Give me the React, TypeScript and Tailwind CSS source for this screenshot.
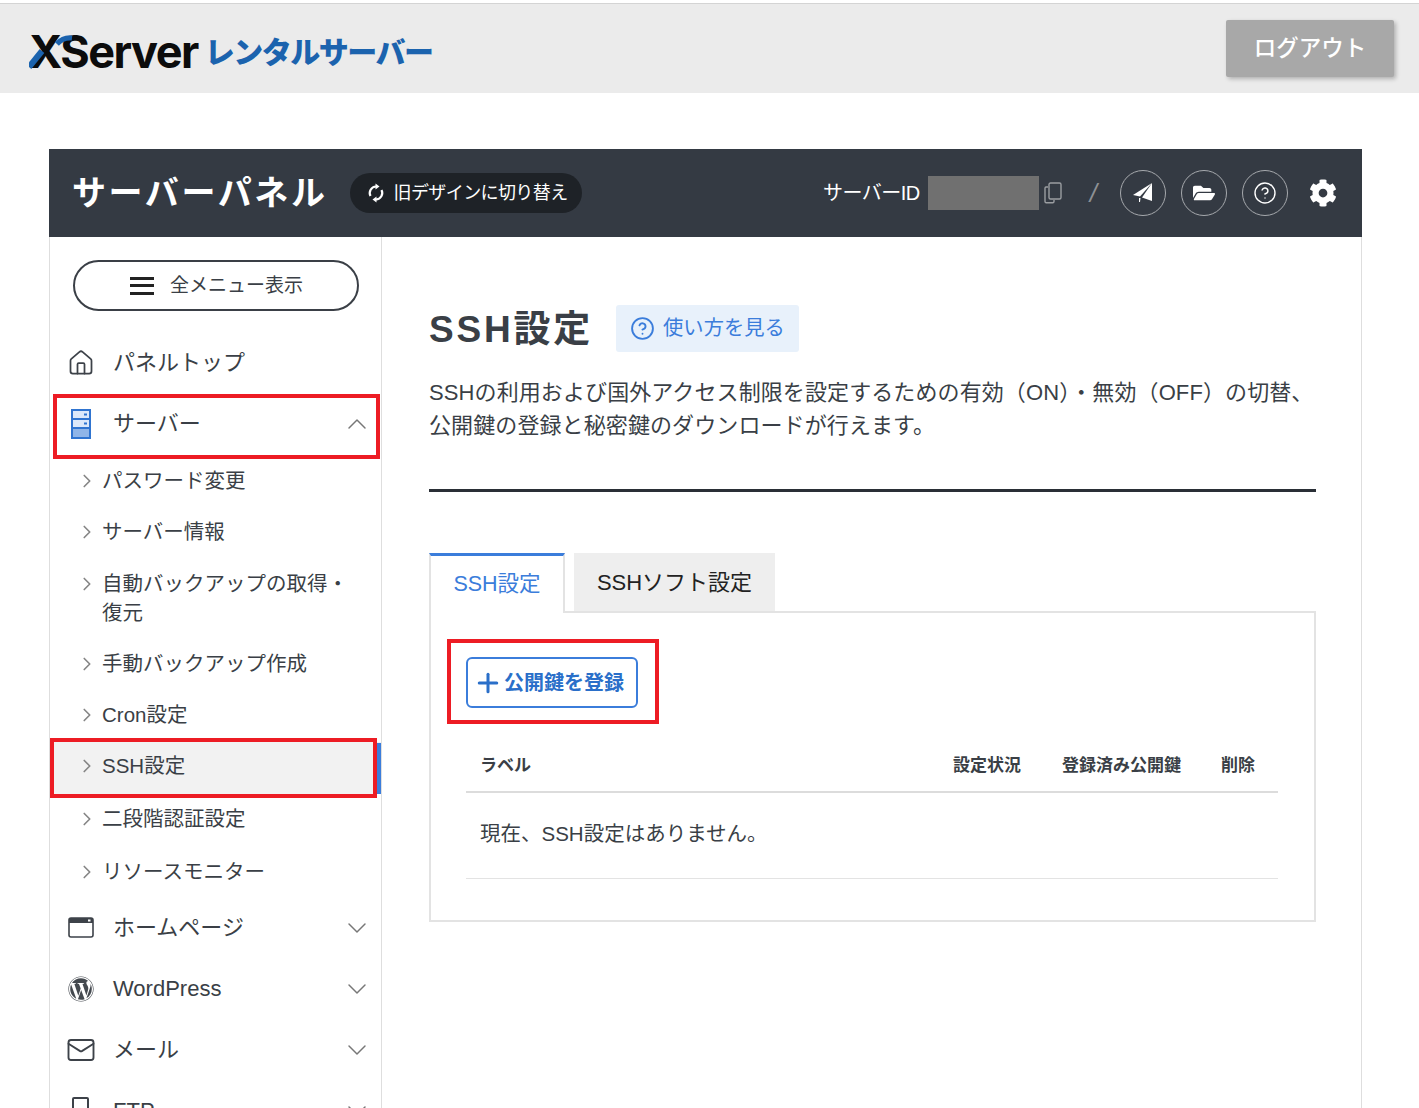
import { ChevronDown, ChevronRight, ChevronUp, CircleHelp, House, Mail, Plus } from "lucide-react";
import { FaCog, FaFolderOpen, FaWordpress } from "react-icons/fa";

const font = "font-['Liberation_Sans','Noto_Sans_CJK_JP',sans-serif]";

const ServerIcon = () => (
  <svg width="20" height="30" viewBox="0 0 20 30" className="block">
    <rect x="1" y="1" width="18" height="28" fill="#dbe8fa" stroke="#2f74d0" strokeWidth="2" />
    <line x1="1" y1="10" x2="19" y2="10" stroke="#2f74d0" strokeWidth="2" />
    <line x1="1" y1="19" x2="19" y2="19" stroke="#2f74d0" strokeWidth="2" />
    <rect x="2" y="20" width="16" height="8" fill="#8fb5e8" />
    <rect x="13" y="4.5" width="3" height="2" fill="#2f74d0" />
    <rect x="13" y="13.5" width="3" height="2" fill="#2f74d0" />
  </svg>
);

const BrowserIcon = () => (
  <svg width="26" height="21" viewBox="0 0 26 21" className="ml-[1px] block">
    <rect x="1" y="1" width="24" height="19" rx="2" fill="none" stroke="#3d4249" strokeWidth="1.6" />
    <rect x="1" y="1" width="24" height="5" fill="#3d4249" />
    <rect x="20" y="2.5" width="2.5" height="2" fill="#fff" />
  </svg>
);

const PlaneIcon = () => (
  <svg width="24" height="24" viewBox="0 0 24 24" className="block" fill="#fff">
    <polygon points="21,2 2,14 9,15.5" />
    <polygon points="21,2 11,16.5 21,20" />
    <polygon points="8,17 9.5,17 9,21 8,21" />
  </svg>
);

const SwitchIcon = () => (
  <svg width="18" height="20" viewBox="0 0 18 20" className="block" fill="none" stroke="#fff" strokeWidth="2.2">
    <path d="M3.5 13 A6.5 6.5 0 0 1 9 3.5" />
    <path d="M14.5 7 A6.5 6.5 0 0 1 9 16.5" />
    <polygon points="8.5,0.5 12.5,3.5 8.5,6.5" fill="#fff" stroke="none" />
    <polygon points="9.5,13.5 5.5,16.5 9.5,19.5" fill="#fff" stroke="none" />
  </svg>
);

const CopyIcon = () => (
  <svg width="18" height="22" viewBox="0 0 18 22" className="block" fill="none" stroke="#9a9da1" strokeWidth="1.4">
    <path d="M4 5 H2 A1.2 1.2 0 0 0 1 6 V19.5 A1.2 1.2 0 0 0 2 20.7 H9 A1.2 1.2 0 0 0 10 19.5 V18" />
    <rect x="5" y="1" width="12" height="16" rx="1.5" />
  </svg>
);

const MainRow = ({ icon, label, open }: { icon: React.ReactNode; label: string; open?: boolean }) => (
  <div className="flex h-[61px] items-center pl-[17px] pr-[12px]">
    <div className="flex w-[46px] shrink-0 items-center justify-start">{icon}</div>
    <span className="flex-1 text-[22px] text-[#3a3f46]">{label}</span>
    {open === undefined ? null : open ? (
      <ChevronUp className="-m-[4px] h-[32px] w-[32px] text-[#777]" strokeWidth={1.1} />
    ) : (
      <ChevronDown className="-m-[4px] h-[32px] w-[32px] text-[#777]" strokeWidth={1.1} />
    )}
  </div>
);

const SubRow = ({ lines, h = "h-[52px]", pt = "pt-[11px]", bg = "" }: { lines: string[]; h?: string; pt?: string; bg?: string }) => (
  <div className={`flex items-start ${h} ${pt} ${bg} pl-[26px]`}>
    <ChevronRight className="mt-[4px] mr-[4px] h-[22px] w-[22px] shrink-0 text-[#858585]" strokeWidth={1.8} />
    <div className="text-[20.5px] leading-[29px] text-[#3a3f46]">
      {lines.map((l) => (
        <div key={l}>{l}</div>
      ))}
    </div>
  </div>
);

const HeadCircle = ({ children }: { children: React.ReactNode }) => (
  <div className="flex h-[46px] w-[46px] items-center justify-center rounded-full border border-[#a6a9ad] text-white">
    {children}
  </div>
);

export default function App() {
  return (
    <div className={`relative h-[1108px] overflow-hidden bg-white ${font}`}>
      {/* top bar */}
      <div className="mt-[3px] flex h-[90px] items-center justify-between border-t border-[#d4d4d4] bg-[#ebebeb] pl-[29px] pr-[25px]">
        <div className="mt-[6px] flex items-center">
          <div className="relative font-['Inter',sans-serif] text-[45px] font-bold leading-none tracking-[-1.5px] text-[#0c0c0c]">
            XServer
            <svg width="48" height="45" viewBox="0 0 48 45" className="absolute left-0 top-0">
              <path d="M0 38 L13 22" stroke="#1b63ae" strokeWidth="6" fill="none" />
              <path d="M28 15 Q34 8 43 9" stroke="#1b63ae" strokeWidth="5" fill="none" />
            </svg>
          </div>
          <span className="ml-[7px] mt-[3px] text-[30px] font-black leading-none tracking-[-1.5px] text-[#1b63ae]">
            レンタルサーバー
          </span>
        </div>
        <button className="mb-[1px] h-[57px] w-[168px] rounded-[2px] bg-[#a8a8a8] pt-[1px] text-[22.5px] font-medium text-white shadow-[2px_2px_4px_rgba(0,0,0,0.25)]">
          ログアウト
        </button>
      </div>

      {/* panel */}
      <div className="ml-[49px] mt-[56px] w-[1313px]">
        <div className="flex h-[88px] items-center bg-[#343a43] pl-[23px] pr-[25px]">
          <span className="text-[34px] font-bold tracking-[2.6px] text-white">サーバーパネル</span>
          <div className="ml-[22px] flex h-[40px] w-[232px] items-center rounded-full bg-[#1e2227] pl-[17px] text-[18px] text-white">
            <SwitchIcon />
            <span className="ml-[9px] tracking-[-0.6px]">旧デザインに切り替え</span>
          </div>
          <div className="ml-auto flex items-center">
            <span className="text-[20px] tracking-[-0.5px] text-white">サーバーID</span>
            <div className="ml-[8px] h-[34px] w-[111px] bg-[#707070]" />
            <div className="ml-[5px]"><CopyIcon /></div>
            <span className="ml-[28px] mr-[23px] text-[26px] font-light italic text-[#8d9094]">/</span>
            <div className="flex items-center gap-[15px]">
              <HeadCircle><PlaneIcon /></HeadCircle>
              <HeadCircle><FaFolderOpen className="h-[22px] w-[22px]" /></HeadCircle>
              <HeadCircle><CircleHelp className="h-[24px] w-[24px]" strokeWidth={1.4} /></HeadCircle>
              <FaCog className="ml-[6px] h-[28px] w-[28px] text-white" />
            </div>
          </div>
        </div>

        <div className="flex h-[900px] border-x border-[#dedede]">
          {/* sidebar */}
          <aside className="w-[332px] shrink-0 border-r border-[#dedede]">
            <div className="flex justify-center pt-[23px] pb-[21px]">
              <div className="flex h-[51px] w-[286px] items-center justify-center rounded-full border-2 border-[#3a3f46] pl-[2px] text-[19px] text-[#3a3f46]">
                <span className="mr-[16px] flex h-[18px] w-[24px] flex-col justify-between">
                  <span className="h-[3px] bg-[#222]" />
                  <span className="h-[3px] bg-[#222]" />
                  <span className="h-[3px] bg-[#222]" />
                </span>
                <span className="pt-[2px]">全メニュー表示</span>
              </div>
            </div>
            <MainRow icon={<House className="h-[28px] w-[28px] text-[#3d4249]" strokeWidth={1.5} />} label="パネルトップ" />
            <div className="relative">
              <MainRow icon={<span className="ml-[4px]"><ServerIcon /></span>} label="サーバー" open />
              <div className="absolute left-[3px] top-[1px] h-[65px] w-[327px] border-4 border-[#ed1c24]" />
            </div>
            <SubRow lines={["パスワード変更"]} pt="pt-[12px]" />
            <SubRow lines={["サーバー情報"]} pt="pt-[11px]" />
            <SubRow lines={["自動バックアップの取得・", "復元"]} h="h-[80px]" pt="pt-[11px]" />
            <SubRow lines={["手動バックアップ作成"]} pt="pt-[11px]" />
            <SubRow lines={["Cron設定"]} pt="pt-[10px]" />
            <div className="relative">
              <SubRow lines={["SSH設定"]} pt="pt-[9px]" bg="bg-[#f2f2f2]" />
              <div className="absolute left-0 top-[-4px] h-[60px] w-[327px] border-4 border-[#ed1c24]" />
              <div className="absolute right-0 top-[1px] h-[51px] w-[4px] bg-[#3b7ddb]" />
            </div>
            <SubRow lines={["二段階認証設定"]} pt="pt-[10px]" />
            <SubRow lines={["リソースモニター"]} h="h-[51px]" pt="pt-[11px]" />
            <MainRow icon={<BrowserIcon />} label="ホームページ" open={false} />
            <MainRow icon={<FaWordpress className="ml-[1px] h-[26px] w-[26px] text-[#44494f]" />} label="WordPress" open={false} />
            <MainRow icon={<Mail className="-my-[1px] -ml-[1px] h-[30px] w-[30px] text-[#3d4249]" strokeWidth={1.5} />} label="メール" open={false} />
            <MainRow icon={<div className="ml-[5px] h-[28px] w-[17px] rounded-[2px] border-2 border-[#3d4249]" />} label="FTP" open={false} />
          </aside>

          {/* main */}
          <main className="flex-1 pl-[47px] pr-[45px] pt-[67px]">
            <div className="flex items-center">
              <h1 className="mt-[2px] text-[37px] font-bold leading-[47px] tracking-[2.8px] text-[#3a3f46]">SSH設定</h1>
              <div className="ml-[23px] flex h-[47px] w-[183px] items-center rounded-[3px] bg-[#e8f1fb] pl-[14px] text-[20.3px] text-[#3b7ddb]">
                <CircleHelp className="mr-[8px] h-[25px] w-[25px]" strokeWidth={1.8} />
                使い方を見る
              </div>
            </div>
            <p className="mt-[23px] whitespace-nowrap text-[22px] leading-[33px] tracking-[0.1px] text-[#3a3f46]">
              SSHの利用および国外アクセス制限を設定するための有効（ON）・無効（OFF）の切替、
              <br />
              公開鍵の登録と秘密鍵のダウンロードが行えます。
            </p>
            <div className="mt-[47px] h-[3px] bg-[#2a2f36]" />

            <div className="mt-[61px] flex h-[60px] items-end">
              <div className="flex h-[60px] w-[136px] items-center justify-center border-x-2 border-t-[3px] border-x-[#e3e3e3] border-t-[#3b7ddb] bg-white text-[21.5px] text-[#3b7ddb]">
                SSH設定
              </div>
              <div className="h-[60px] w-[9px] border-b-2 border-[#e3e3e3]" />
              <div className="flex h-[60px] w-[201px] items-center justify-center border-b-2 border-[#e3e3e3] bg-[#eeeeee] text-[22px] text-[#222]">
                SSHソフト設定
              </div>
              <div className="h-[60px] flex-1 border-b-2 border-[#e3e3e3]" />
            </div>
            <div className="h-[309px] border-2 border-t-0 border-[#e3e3e3] pl-[35px] pr-[36px] pt-[44px]">
              <div className="relative">
                <button className="flex h-[51px] w-[172px] items-center justify-center rounded-[6px] border-2 border-[#3b7ddb] pr-[2px] text-[20px] font-bold text-[#2a6fc9]">
                  <Plus className="-ml-[5px] mr-[1px] h-[30px] w-[30px]" strokeWidth={2.4} />
                  公開鍵を登録
                </button>
                <div className="absolute left-[-19px] top-[-18px] h-[85px] w-[212px] border-4 border-[#ed1c24]" />
              </div>
              <div className="mt-[28px] flex h-[57px] items-center border-b-2 border-[#dcdcdc] pt-[4px] text-[17px] font-bold text-[#3a3f46]">
                <span className="ml-[14px] w-[473px]">ラベル</span>
                <span className="w-[109px]">設定状況</span>
                <span className="w-[159px]">登録済み公開鍵</span>
                <span>削除</span>
              </div>
              <div className="flex h-[86px] items-center border-b border-[#e3e3e3] pb-[2px] pl-[14px] text-[20.5px] text-[#3a3f46]">
                現在、SSH設定はありません。
              </div>
            </div>
          </main>
        </div>
      </div>
    </div>
  );
}
